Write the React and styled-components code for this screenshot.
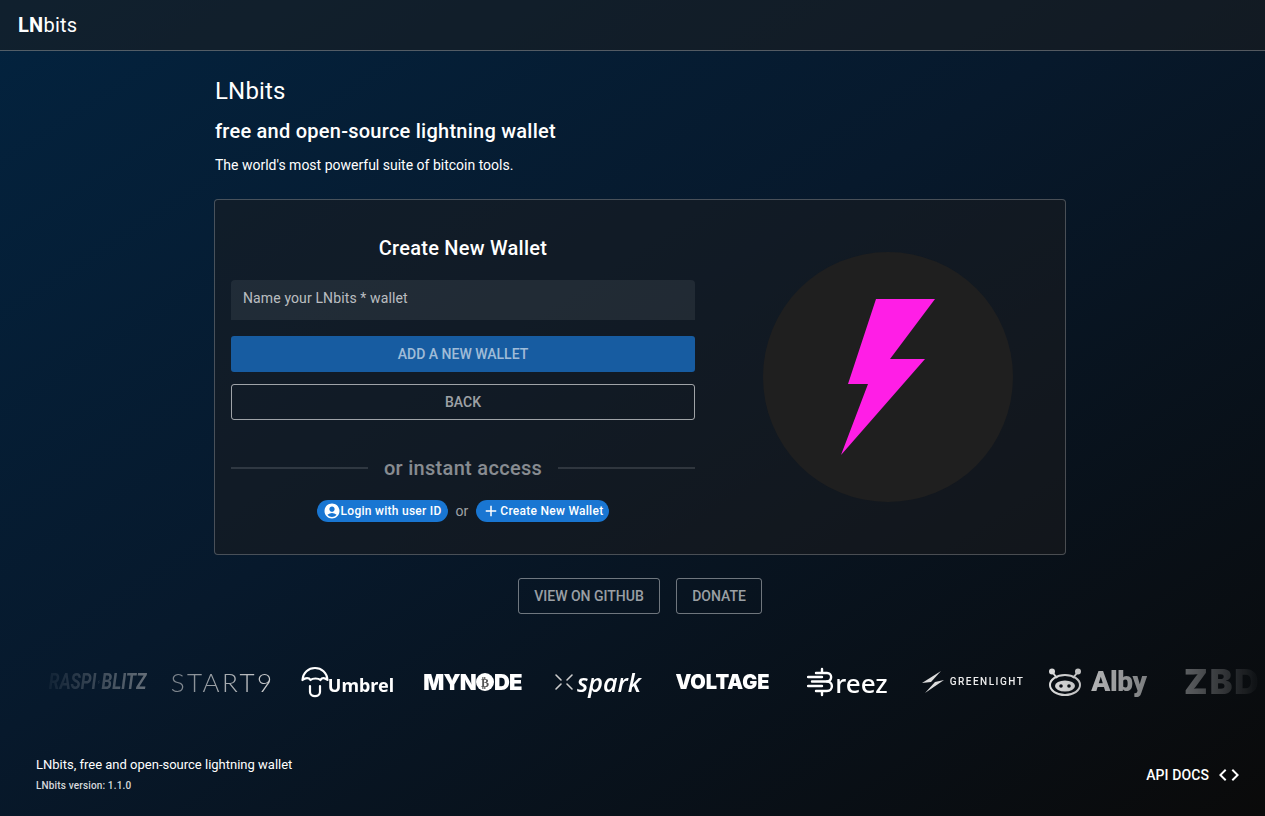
import styled, { createGlobalStyle } from 'styled-components'
import { MdAccountCircle, MdAdd, MdCode } from 'react-icons/md'

const GlobalStyle = createGlobalStyle`
    html, body {
        margin: 0;
        height: 100%;
        overflow: hidden;
    }
    body {
        font-family: Roboto, "Liberation Sans", sans-serif;
        font-size: 14px;
        color: #fff;
        background: #080808;
    }
    * {
        box-sizing: border-box;
    }
`

const Page = styled.div`
    height: 816px;
    display: flex;
    flex-direction: column;
    background: linear-gradient(to bottom right, #03233f 0%, #07192c 45%, #0a0a0a 100%);
`

const Header = styled.header`
    height: 51px;
    flex: none;
    display: flex;
    align-items: center;
    padding: 0 18px;
    background: rgba(30, 30, 30, 0.5);
    border-bottom: 1px solid rgba(255, 255, 255, 0.28);
    font-size: 20px;
    font-weight: 400;
    letter-spacing: 0.25px;
    strong {
        font-weight: 700;
    }
`

const Main = styled.main`
    width: 852px;
    margin-left: 214px;
    padding-top: 24px;
    flex: none;
`

const Title = styled.h1`
    margin: 0 0 8px 1px;
    font-size: 24px;
    line-height: 32px;
    font-weight: 400;
    letter-spacing: 0.18px;
`

const Subtitle = styled.h2`
    margin: 0 0 8px 1px;
    font-size: 20px;
    line-height: 32px;
    font-weight: 500;
    letter-spacing: 0.25px;
`

const Lead = styled.p`
    margin: 0 0 24px 1px;
    font-size: 14px;
    line-height: 20px;
`

const Card = styled.section`
    display: grid;
    grid-template-columns: 496px 1fr;
    height: 356px;
    border: 1px solid rgba(255, 255, 255, 0.24);
    border-radius: 4px;
    background: rgba(28, 28, 30, 0.5);
`

const FormColumn = styled.div`
    padding: 32px 16px 0;
`

const CardTitle = styled.h3`
    margin: 0 0 16px;
    font-size: 20px;
    line-height: 32px;
    font-weight: 500;
    letter-spacing: 0.25px;
    text-align: center;
`

const Field = styled.div`
    height: 40px;
    padding: 9px 12px 0;
    margin-bottom: 16px;
    background: rgba(255, 255, 255, 0.07);
    border-radius: 4px 4px 0 0;
    font-size: 14px;
    line-height: 18px;
    letter-spacing: 0.12px;
    color: rgba(255, 255, 255, 0.7);
`

const Button = styled.button`
    display: block;
    width: ${props => props.$width || '100%'};
    height: 36px;
    margin: 0;
    padding: 0 15px;
    border: ${props => props.$filled ? 'none' : `1px solid rgba(255, 255, 255, ${props.$dim ? 0.42 : 0.6})`};
    border-radius: 3px;
    background: ${props => props.$filled ? '#175ca1' : 'transparent'};
    color: rgba(255, 255, 255, 0.6);
    font-family: inherit;
    font-size: 14px;
    font-weight: 500;
    text-transform: uppercase;
`

const ButtonStack = styled.div`
    display: flex;
    flex-direction: column;
    gap: 12px;
`

const Divider = styled.div`
    display: flex;
    align-items: center;
    gap: 16px;
    margin-top: 34px;
    height: 28px;
    font-size: 20px;
    font-weight: 500;
    letter-spacing: 0.3px;
    color: rgba(255, 255, 255, 0.5);
    &::before, &::after {
        content: '';
        flex: 1;
        height: 2px;
        background: rgba(255, 255, 255, 0.13);
    }
`

const PillRow = styled.div`
    display: flex;
    justify-content: center;
    align-items: center;
    gap: 8px;
    margin-top: 18px;
    color: rgba(255, 255, 255, 0.6);
    font-size: 14px;
`

const Pill = styled.span`
    display: flex;
    align-items: center;
    height: 22px;
    padding: 0 6px;
    border-radius: 11px;
    background: #1976d2;
    color: #fff;
    font-size: 12px;
    font-weight: 500;
    letter-spacing: 0.27px;
    white-space: nowrap;
`

const ImageColumn = styled.div`
    display: flex;
    align-items: center;
    justify-content: center;
`

const Actions = styled.div`
    display: flex;
    justify-content: center;
    gap: 16px;
    margin-top: 23px;
`

const LogoBand = styled.div`
    margin-top: 38px;
    height: 60px;
    flex: none;
    display: flex;
    align-items: center;
    padding-left: 35px;
    overflow: hidden;
    mask-image: linear-gradient(to right, transparent 36px, #000 290px, #000 1050px, transparent 1262px);
`

const LogoCell = styled.div`
    flex: none;
    width: 125px;
    display: flex;
    align-items: center;
    justify-content: center;
    gap: ${props => props.$gap || 0}px;
    white-space: nowrap;
    color: #fff;
    transform: scaleX(${props => props.$squeeze || 1});
`

const LogoText = styled.span`
    font-family: ${props => props.$font || 'Inter'}, Roboto, sans-serif;
    font-size: ${props => props.$size}px;
    font-weight: ${props => props.$weight || 700};
    font-style: ${props => props.$italic ? 'italic' : 'normal'};
    letter-spacing: ${props => props.$spacing || 0}px;
    color: ${props => props.$color || '#fff'};
    line-height: 1;
    margin-top: ${props => props.$drop || 0}px;
    margin-left: ${props => props.$pull || 0}px;
`

const Footer = styled.footer`
    margin-top: auto;
    display: flex;
    align-items: center;
    justify-content: space-between;
    padding: 0 24px 23px 36px;
`

const FooterText = styled.div`
    font-size: 13px;
    line-height: 18px;
`

const Version = styled.div`
    margin-top: 5px;
    font-size: 10px;
    line-height: 14px;
    font-weight: 500;
    letter-spacing: 0.15px;
    color: rgba(255, 255, 255, 0.85);
`

const ApiLink = styled.div`
    display: flex;
    align-items: center;
    gap: 8px;
    font-size: 14px;
    font-weight: 500;
    letter-spacing: 0.1px;
`

const UmbrelIcon = () => (
    <svg width="28" height="32" viewBox="0 0 28 32" fill="none" stroke="#fff" strokeWidth="2.2" strokeLinecap="round" strokeLinejoin="round">
        <path d="M1.5 14C2 6.500 7.500 2 14 2s12 4.500 12.500 12c-3-2.500-5.500-2.500-7 0-2-2-8-2-10 0-1.500-2.500-5-2.500-8 0z" />
        <path d="M9 20v6c0 5.500 10 5.500 10 0v-6" />
    </svg>
)

const MynodeCoin = () => (
    <svg width="18" height="18" viewBox="0 0 18 18">
        <circle cx="9" cy="9" r="9" fill="#fff" />
        <text x="9" y="13.500" fontSize="12" fontWeight="700" fontFamily="Roboto" textAnchor="middle" fill="#555">₿</text>
    </svg>
)

const SparkIcon = () => (
    <svg width="20" height="20" viewBox="0 0 20 20" stroke="#ccc" strokeWidth="1.6" strokeLinecap="round">
        <path d="M2 3l5 5M18 3l-5 5M2 17l5-5M18 17l-5-5" />
    </svg>
)

const BreezIcon = () => (
    <svg width="28" height="30" viewBox="0 0 28 30" fill="none" stroke="#fff" strokeWidth="2.4" strokeLinecap="round" strokeLinejoin="round">
        <path d="M9 6h11c5.500 0 5.500 8 0 8.500 6.500 0 6.500 9.500 0 9.500H9" />
        <path d="M1 10h14M5 14.500h15M1 19h14" />
        <path d="M15 2v3M15 25v3" />
    </svg>
)

const GreenlightIcon = () => (
    <svg width="24" height="24" viewBox="0 0 24 24" fill="#ddd">
        <path d="M20 1L1 13l9-1z" />
        <path d="M23 10l-9 2L4 23z" />
    </svg>
)

const AlbyIcon = () => (
    <svg width="34" height="28" viewBox="0 0 34 28" fill="none" stroke="#ddd" strokeWidth="2">
        <circle cx="4" cy="3.500" r="3" fill="#ddd" stroke="none" />
        <circle cx="30" cy="3.500" r="3" fill="#ddd" stroke="none" />
        <path d="M5 5l4 5M29 5l-4 5" />
        <ellipse cx="17" cy="17" rx="15" ry="10" />
        <ellipse cx="17" cy="18" rx="10" ry="5.500" fill="#ddd" stroke="none" />
        <circle cx="13" cy="18" r="1.800" fill="#0a0e14" stroke="none" />
        <circle cx="21" cy="18" r="1.800" fill="#0a0e14" stroke="none" />
    </svg>
)

const RaspiBolt = () => (
    <svg width="12" height="18" viewBox="0 0 12 18" fill="none" stroke="#ddd" strokeWidth="2">
        <path d="M9 1L2 9h7l-6 8" />
    </svg>
)

const Logos = () => (
    <LogoBand>
        <LogoCell $gap={2} $squeeze={0.78}>
            <LogoText $font="Roboto" $size={22} $italic $color="#ddd">RASPI</LogoText>
            <RaspiBolt />
            <LogoText $font="Roboto" $size={22} $italic $color="#ddd">BLITZ</LogoText>
        </LogoCell>
        <LogoCell>
            <LogoText $font="Lato" $size={26} $weight={300} $spacing={2.4} $color="#ddd">START9</LogoText>
        </LogoCell>
        <LogoCell>
            <UmbrelIcon />
            <LogoText $font='"Noto Sans"' $size={18} $weight={700} $drop={6} $pull={-1}>Umbrel</LogoText>
        </LogoCell>
        <LogoCell>
            <LogoText $size={22} $weight={900} $spacing={-0.8}>MYN</LogoText>
            <MynodeCoin />
            <LogoText $size={22} $weight={900} $spacing={-0.8}>DE</LogoText>
        </LogoCell>
        <LogoCell $gap={3}>
            <SparkIcon />
            <LogoText $font='"Open Sans"' $size={25} $weight={600} $italic>spark</LogoText>
        </LogoCell>
        <LogoCell>
            <LogoText $size={20} $weight={900}>VOLTAGE</LogoText>
        </LogoCell>
        <LogoCell>
            <BreezIcon />
            <LogoText $font='"Noto Sans"' $size={26} $weight={500} $drop={2}>reez</LogoText>
        </LogoCell>
        <LogoCell $gap={5}>
            <GreenlightIcon />
            <LogoText $font="Roboto" $size={10} $weight={500} $spacing={1.5} $color="#eee">GREENLIGHT</LogoText>
        </LogoCell>
        <LogoCell $gap={9}>
            <AlbyIcon />
            <LogoText $font="Roboto" $size={28} $weight={900} $color="#ddd" $spacing={-0.3}>Alby</LogoText>
        </LogoCell>
        <LogoCell>
            <LogoText $size={34} $weight={900} $color="#eee" $spacing={2}>ZBD</LogoText>
        </LogoCell>
    </LogoBand>
)

const App = () => {
    return (
        <Page>
            <GlobalStyle />
            <Header>
                <span><strong>LN</strong>bits</span>
            </Header>

            <Main>
                <Title>LNbits</Title>
                <Subtitle>free and open-source lightning wallet</Subtitle>
                <Lead>The world's most powerful suite of bitcoin tools.</Lead>

                <Card>
                    <FormColumn>
                        <CardTitle>Create New Wallet</CardTitle>
                        <Field>Name your LNbits * wallet</Field>
                        <ButtonStack>
                            <Button $filled>Add a new wallet</Button>
                            <Button>Back</Button>
                        </ButtonStack>
                        <Divider>or instant access</Divider>
                        <PillRow>
                            <Pill>
                                <MdAccountCircle size={18} />
                                Login with user ID
                            </Pill>
                            <span>or</span>
                            <Pill>
                                <MdAdd size={18} />
                                Create New Wallet
                            </Pill>
                        </PillRow>
                    </FormColumn>
                    <ImageColumn>
                        <svg width="250" height="250" viewBox="0 0 250 250">
                            <circle cx="125" cy="125" r="125" fill="#1f1f1f" />
                            <path d="M113 47H172L127 107H162L78 203L105 132H85Z" fill="#ff1ee6" />
                        </svg>
                    </ImageColumn>
                </Card>

                <Actions>
                    <Button $dim $width="142px">View on GitHub</Button>
                    <Button $dim $width="86px">Donate</Button>
                </Actions>
            </Main>

            <Logos />

            <Footer>
                <div>
                    <FooterText>LNbits, free and open-source lightning wallet</FooterText>
                    <Version>LNbits version: 1.1.0</Version>
                </div>
                <ApiLink>
                    API DOCS
                    <MdCode size={24} />
                </ApiLink>
            </Footer>
        </Page>
    )
}

export default App
